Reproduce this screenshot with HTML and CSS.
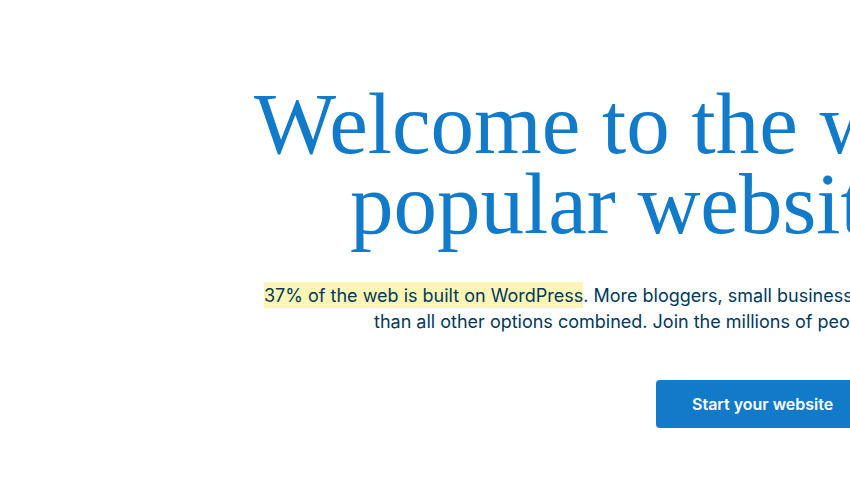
FILE: index.html
```
<!DOCTYPE html>
<html lang="en">
<head>
<meta charset="utf-8">
<meta name="viewport" content="width=device-width, initial-scale=1">
<title>WordPress</title>
<link rel="stylesheet" href="styles.css">
</head>
<body>
<main class="hero">
  <h1 class="title"><span class="line">Welcome to the world’s</span> <span class="line">popular website</span></h1>
  <p class="lead"><span class="line"><mark class="highlight">37% of the web is built on WordPress</mark>. More bloggers, small businesses</span> <span class="line">than all other options combined. Join the millions of people</span></p>
  <a class="button" href="#start">Start your website</a>
</main>
</body>
</html>
```
FILE: styles.css
```
body {
  margin: 0;
  background: #fff;
  color: #00395b;
}

.hero {
  overflow: hidden;
  padding: 84px 0 52px 254px;
  white-space: nowrap;
}

.title {
  margin: 0;
  color: #117ac9;
  font: 400 87px/80px "Liberation Serif", serif;
}

.line {
  display: block;
}

.title .line + .line {
  padding-left: 96px;
}

.lead {
  margin: 39px 0 45px 10px;
  font: 400 18px/26px Inter, sans-serif;
}

.lead .line + .line {
  padding-left: 110px;
}

.highlight {
  padding: 3px 0 2px;
  background: #fff5b5;
  color: inherit;
}

.button {
  display: inline-block;
  margin-left: 402px;
  padding: 12px 36px;
  border-radius: 4px;
  background: #117ac9;
  color: #fff;
  font: 600 16px/24px Inter, sans-serif;
  text-decoration: none;
}
```
